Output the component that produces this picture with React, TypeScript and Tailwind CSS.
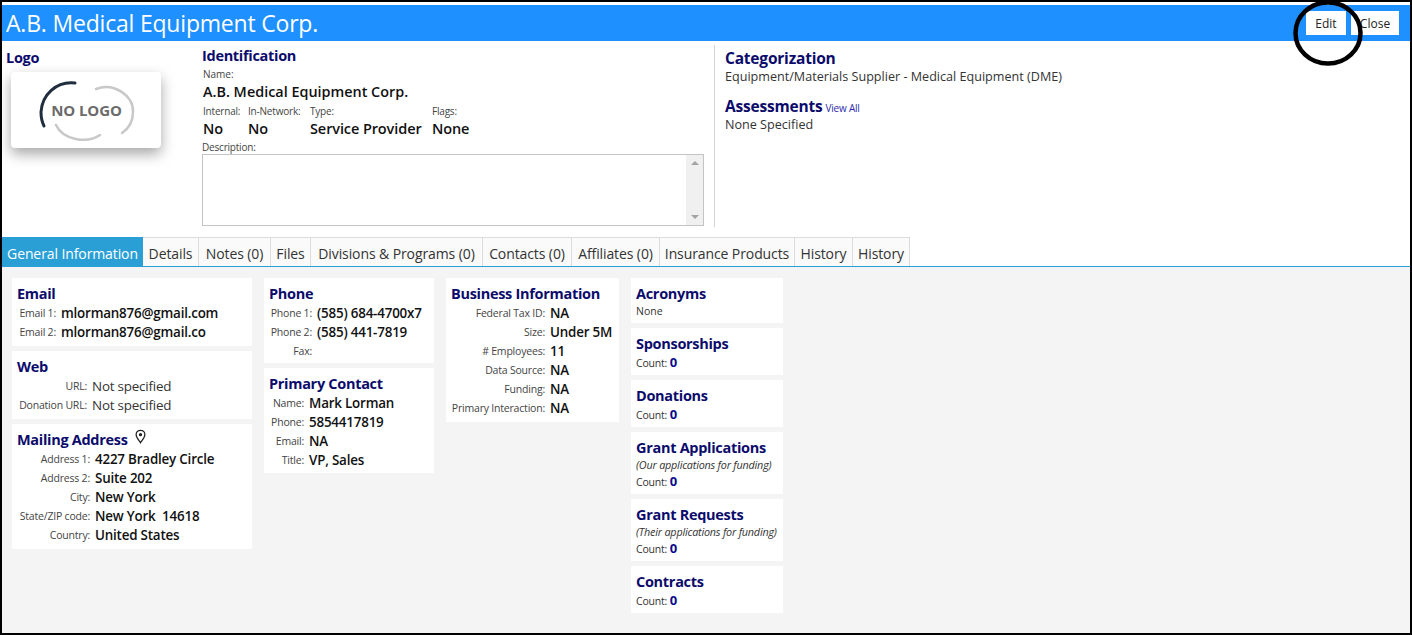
import React from "react";

const tabs = [
  { label: "General Information", width: "w-[141px]", active: true },
  { label: "Details", width: "w-[56px]" },
  { label: "Notes (0)", width: "w-[72px]" },
  { label: "Files", width: "w-[40px]" },
  { label: "Divisions & Programs (0)", width: "w-[172px]" },
  { label: "Contacts (0)", width: "w-[89px]" },
  { label: "Affiliates (0)", width: "w-[88px]" },
  { label: "Insurance Products", width: "w-[135px]" },
  { label: "History", width: "w-[58px]" },
  { label: "History", width: "w-[57px]" },
];

const Card = ({ className = "", children }: { className?: string; children: React.ReactNode }) => (
  <div className={`bg-white ${className}`}>{children}</div>
);

const Heading = ({ children }: { children: React.ReactNode }) => (
  <h2 className="text-[14.5px] leading-[20px] mb-[-1px] font-bold text-[#0b0b6b] tracking-[-0.3px] whitespace-nowrap">{children}</h2>
);

const SectionHeading = ({ children }: { children: React.ReactNode }) => (
  <h2 className="text-[15.5px] leading-[20px] font-bold text-[#0b0b6b] tracking-[-0.2px] whitespace-nowrap">{children}</h2>
);

const Row = ({ label, value, labelWidth, light }: { label: string; value?: string; labelWidth: string; light?: boolean }) => (
  <div className="flex items-center h-[19px]">
    <span className={`${labelWidth} shrink-0 text-right text-[10.5px] text-[#444] tracking-[-0.2px] whitespace-nowrap`}>{label}</span>
    <span
      className={`ml-[5px] text-[13.4px] whitespace-pre tracking-[-0.2px] ${light ? "text-[#333]" : "font-semibold text-[#111]"}`}
    >
      {value}
    </span>
  </div>
);

const CountCard = ({ title, note, className }: { title: string; note?: string; className: string }) => (
  <Card className={`${className} pl-[5px] pt-[6px]`}>
    <Heading>{title}</Heading>
    {note && <p className="text-[10.8px] leading-[14px] mt-[1px] italic text-[#333] whitespace-nowrap tracking-[-0.2px]">{note}</p>}
    <p className="text-[10.5px] leading-[18px] text-[#333] tracking-[-0.2px]">
      Count: <span className="text-[13px] font-bold text-[#0b0b8b]">0</span>
    </p>
  </Card>
);

const NoLogo = () => (
  <div className="relative ml-[5px] mt-[5px] w-[150px] h-[76px] rounded-[4px] bg-white shadow-[0_6px_14px_rgba(0,0,0,0.35)] flex items-center justify-center">
    <svg viewBox="0 0 150 76" className="absolute inset-0 w-[150px] h-[76px]" fill="none">
      <path d="M 64 11 C 45 9 31 23 30 40 C 30 46 31 50 33 54" stroke="#1f2d3d" strokeWidth="3" strokeLinecap="round" />
      <path d="M 85 17 C 103 10 123 24 122 40 C 122 50 117 57 111 61" stroke="#c8c8c8" strokeWidth="2.5" strokeLinecap="round" />
      <path d="M 45 53 C 52 68 76 72 89 63" stroke="#c8c8c8" strokeWidth="2.5" strokeLinecap="round" />
    </svg>
    <span className="relative text-[15px] font-bold text-[#6b6b6b] tracking-[-0.1px] ml-[1px]">NO LOGO</span>
  </div>
);

const MiniField = ({ label, value, width }: { label: string; value: string; width: string }) => (
  <div className={`${width} shrink-0`}>
    <div className="text-[10px] leading-[14px] text-[#444] tracking-[-0.2px] whitespace-nowrap">{label}</div>
    <div className="text-[14.5px] leading-[22px] font-semibold text-[#111] tracking-[-0.1px] whitespace-nowrap">{value}</div>
  </div>
);

export default function App() {
  return (
    <div className="relative w-[1412px] h-[635px] overflow-hidden bg-white border-2 border-black font-['Open_Sans',sans-serif] flex flex-col">
      <div className="h-[3px] shrink-0" />
      <header className="h-[36px] shrink-0 bg-[#1e90ff] flex items-center pl-[4px] pr-[11px]">
        <h1 className="text-[23px] mt-[1px] text-white tracking-[-0.2px] whitespace-nowrap">A.B. Medical Equipment Corp.</h1>
        <button className="ml-auto w-[40px] h-[24px] pt-[1px] bg-white text-[12px] text-[#222]">Edit</button>
        <button className="ml-[5px] w-[48px] h-[24px] pt-[1px] bg-white text-[12px] text-[#222]">Close</button>
      </header>

      <section className="h-[196px] shrink-0 flex">
        <div className="w-[200px] shrink-0 pl-[4px] pt-[7px]">
          <Heading>Logo</Heading>
          <NoLogo />
        </div>
        <div className="w-[502px] shrink-0 pt-[5px]">
          <Heading>Identification</Heading>
          <div className="pl-[1px] text-[10px] leading-[14px] mt-[2px] text-[#444]">Name:</div>
          <div className="pl-[1px] text-[14.4px] leading-[22px] font-semibold text-[#111] whitespace-nowrap">A.B. Medical Equipment Corp.</div>
          <div className="pl-[1px] flex mt-[1px]">
            <MiniField label="Internal:" value="No" width="w-[45px]" />
            <MiniField label="In-Network:" value="No" width="w-[62px]" />
            <MiniField label="Type:" value="Service Provider" width="w-[122px]" />
            <MiniField label="Flags:" value="None" width="w-[60px]" />
          </div>
          <div className="text-[10px] leading-[14px] text-[#444] tracking-[-0.2px]">Description:</div>
          <div className="h-[72px] border border-[#c4c4c4] flex justify-end">
            <div className="w-[17px] h-full bg-[#f0f0f0] flex flex-col items-center justify-between py-[6px]">
              <span className="w-0 h-0 border-x-[4px] border-x-transparent border-b-[4px] border-b-[#a3a3a3]" />
              <span className="w-0 h-0 border-x-[4px] border-x-transparent border-t-[4px] border-t-[#a3a3a3]" />
            </div>
          </div>
        </div>
        <div className="ml-[10px] mt-[4px] h-[182px] w-px bg-[#d4d4d4] shrink-0" />
        <div className="pl-[10px] pt-[7px]">
          <SectionHeading>Categorization</SectionHeading>
          <p className="text-[12.6px] leading-[18px] text-[#333]">Equipment/Materials Supplier - Medical Equipment (DME)</p>
          <div className="mt-[10px] flex items-baseline gap-[3px]">
            <SectionHeading>Assessments</SectionHeading>
            <a className="text-[10px] text-[#2b2bab] tracking-[-0.2px]">View All</a>
          </div>
          <p className="text-[12.6px] leading-[18px] text-[#333]">None Specified</p>
        </div>
      </section>

      <nav className="h-[30px] shrink-0 flex border-b border-[#2a9fd6]">
        {tabs.map((tab, i) => (
          <div
            key={i}
            className={`${tab.width} shrink-0 flex items-center justify-center pt-[2px] text-[14px] tracking-[-0.1px] whitespace-nowrap border-t ${
              tab.active
                ? "bg-[#2a9fd6] text-white border-[#2a9fd6]"
                : "bg-[#fafafa] text-[#333] border-[#dcdcdc] border-r"
            }`}
          >
            {tab.label}
          </div>
        ))}
      </nav>

      <main className="flex-1 bg-[#f4f4f4] pl-[10px] pt-[11px] flex items-start gap-[12px]">
        <div className="w-[240px] shrink-0 flex flex-col gap-[5px]">
          <Card className="h-[68px] pl-[5px] pt-[6px]">
            <Heading>Email</Heading>
            <div className="mt-[1px]">
              <Row label="Email 1:" value="mlorman876@gmail.com" labelWidth="w-[39px]" />
              <Row label="Email 2:" value="mlorman876@gmail.co" labelWidth="w-[39px]" />
            </div>
          </Card>
          <Card className="h-[68px] pl-[5px] pt-[6px]">
            <Heading>Web</Heading>
            <div className="mt-[1px]">
              <Row label="URL:" value="Not specified" labelWidth="w-[70px]" light />
              <Row label="Donation URL:" value="Not specified" labelWidth="w-[70px]" light />
            </div>
          </Card>
          <Card className="h-[125px] pl-[5px] pt-[6px]">
            <div className="flex items-center gap-[5px] h-[19px]">
              <Heading>Mailing Address</Heading>
              <svg viewBox="0 0 24 24" className="w-[15px] h-[17px] -mt-[6px] text-[#222]" fill="none" stroke="currentColor" strokeWidth="2">
                <path d="M12 22 C8 16 5 13 5 9 a7 7 0 0 1 14 0 C19 13 16 16 12 22 Z" />
                <circle cx="12" cy="9" r="1.6" fill="currentColor" />
              </svg>
            </div>
            <div className="mt-[1px]">
              <Row label="Address 1:" value="4227 Bradley Circle" labelWidth="w-[73px]" />
              <Row label="Address 2:" value="Suite 202" labelWidth="w-[73px]" />
              <Row label="City:" value="New York" labelWidth="w-[73px]" />
              <Row label="State/ZIP code:" value="New York  14618" labelWidth="w-[73px]" />
              <Row label="Country:" value="United States" labelWidth="w-[73px]" />
            </div>
          </Card>
        </div>

        <div className="w-[170px] shrink-0 flex flex-col gap-[5px]">
          <Card className="h-[85px] pl-[5px] pt-[6px]">
            <Heading>Phone</Heading>
            <div className="mt-[1px]">
              <Row label="Phone 1:" value="(585) 684-4700x7" labelWidth="w-[43px]" />
              <Row label="Phone 2:" value="(585) 441-7819" labelWidth="w-[43px]" />
              <Row label="Fax:" labelWidth="w-[43px]" />
            </div>
          </Card>
          <Card className="h-[105px] pl-[5px] pt-[6px]">
            <Heading>Primary Contact</Heading>
            <div className="mt-[1px]">
              <Row label="Name:" value="Mark Lorman" labelWidth="w-[35px]" />
              <Row label="Phone:" value="5854417819" labelWidth="w-[35px]" />
              <Row label="Email:" value="NA" labelWidth="w-[35px]" />
              <Row label="Title:" value="VP, Sales" labelWidth="w-[35px]" />
            </div>
          </Card>
        </div>

        <Card className="w-[173px] h-[144px] shrink-0 pl-[5px] pt-[6px]">
          <Heading>Business Information</Heading>
          <div className="mt-[1px]">
            <Row label="Federal Tax ID:" value="NA" labelWidth="w-[94px]" />
            <Row label="Size:" value="Under 5M" labelWidth="w-[94px]" />
            <Row label="# Employees:" value="11" labelWidth="w-[94px]" />
            <Row label="Data Source:" value="NA" labelWidth="w-[94px]" />
            <Row label="Funding:" value="NA" labelWidth="w-[94px]" />
            <Row label="Primary Interaction:" value="NA" labelWidth="w-[94px]" />
          </div>
        </Card>

        <div className="w-[152px] shrink-0 flex flex-col gap-[5px]">
          <Card className="h-[45px] pl-[5px] pt-[6px]">
            <Heading>Acronyms</Heading>
            <p className="text-[10.5px] leading-[14px] mt-[1px] text-[#333]">None</p>
          </Card>
          <CountCard title="Sponsorships" className="h-[47px]" />
          <CountCard title="Donations" className="h-[47px]" />
          <CountCard title="Grant Applications" note="(Our applications for funding)" className="h-[62px]" />
          <CountCard title="Grant Requests" note="(Their applications for funding)" className="h-[62px]" />
          <CountCard title="Contracts" className="h-[47px]" />
        </div>
      </main>

      {/* hand-drawn circle around the Edit button */}
      <svg viewBox="0 0 72 70" className="absolute left-[1290px] top-[-3px] w-[72px] h-[70px]" fill="none">
        <ellipse cx="36" cy="34" rx="32.5" ry="30.5" stroke="#000" strokeWidth="4.5" />
      </svg>
    </div>
  );
}
